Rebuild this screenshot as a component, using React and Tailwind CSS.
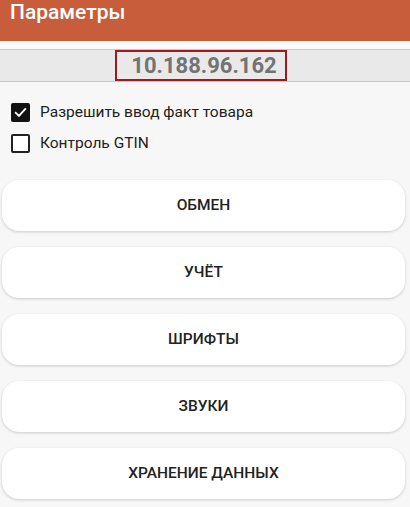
import { useState } from 'react';

const sections = ['ОБМЕН', 'УЧЁТ', 'ШРИФТЫ', 'ЗВУКИ', 'ХРАНЕНИЕ ДАННЫХ'];

function CheckRow({ label, checked, onToggle }) {
  return (
    <div className="flex items-center h-[31px] pl-[11px] cursor-pointer" onClick={onToggle}>
      <div
        className={
          'w-[19px] h-[19px] rounded-[2px] flex items-center justify-center ' +
          (checked ? 'bg-[#111]' : 'border-2 border-[#222] bg-white')
        }
      >
        {checked && (
          <svg width="15" height="15" viewBox="0 0 24 24" fill="none">
            <path d="M4.5 12.5l5 5 10-11" stroke="white" strokeWidth="3" strokeLinecap="square" />
          </svg>
        )}
      </div>
      <span className="ml-[10px] text-[15.5px] text-[#222]">{label}</span>
    </div>
  );
}

export default function App() {
  const [allowFact, setAllowFact] = useState(true);
  const [gtin, setGtin] = useState(false);

  return (
    <div className="w-[410px] h-[507px] overflow-hidden bg-[#f7f7f7]" style={{ fontFamily: 'Roboto, "Noto Sans", sans-serif' }}>
      {/* Header */}
      <div className="h-[41px] bg-[#c85d3c] px-[10px]">
        <h1 className="text-[21px] leading-[24px] font-medium text-white">Параметры</h1>
      </div>

      <div className="h-[8px] bg-[#fafafa]" />

      {/* Address bar */}
      <div className="h-[33px] bg-[#e9e9e9] border-y border-[#c9c9c9] flex">
        <div className="ml-[115px] w-[172px] h-full border-2 border-[#a3181c] flex items-center justify-center pl-[6px]">
          <span className="text-[22px] font-bold text-[#737373] leading-none">10.188.96.162</span>
        </div>
      </div>

      {/* Options */}
      <div className="pt-[15px]">
        <CheckRow label="Разрешить ввод факт товара" checked={allowFact} onToggle={() => setAllowFact(!allowFact)} />
        <CheckRow label="Контроль GTIN" checked={gtin} onToggle={() => setGtin(!gtin)} />
      </div>

      {/* Sections */}
      <div className="flex flex-col gap-[16px] mt-[21px] ml-[2px] mr-[5px]">
        {sections.map((s) => (
          <button
            key={s}
            className="h-[51px] rounded-[17px] bg-white shadow-[0_1px_3px_rgba(0,0,0,0.18)] text-[15.5px] font-medium text-[#222]"
          >
            {s}
          </button>
        ))}
      </div>
    </div>
  );
}
